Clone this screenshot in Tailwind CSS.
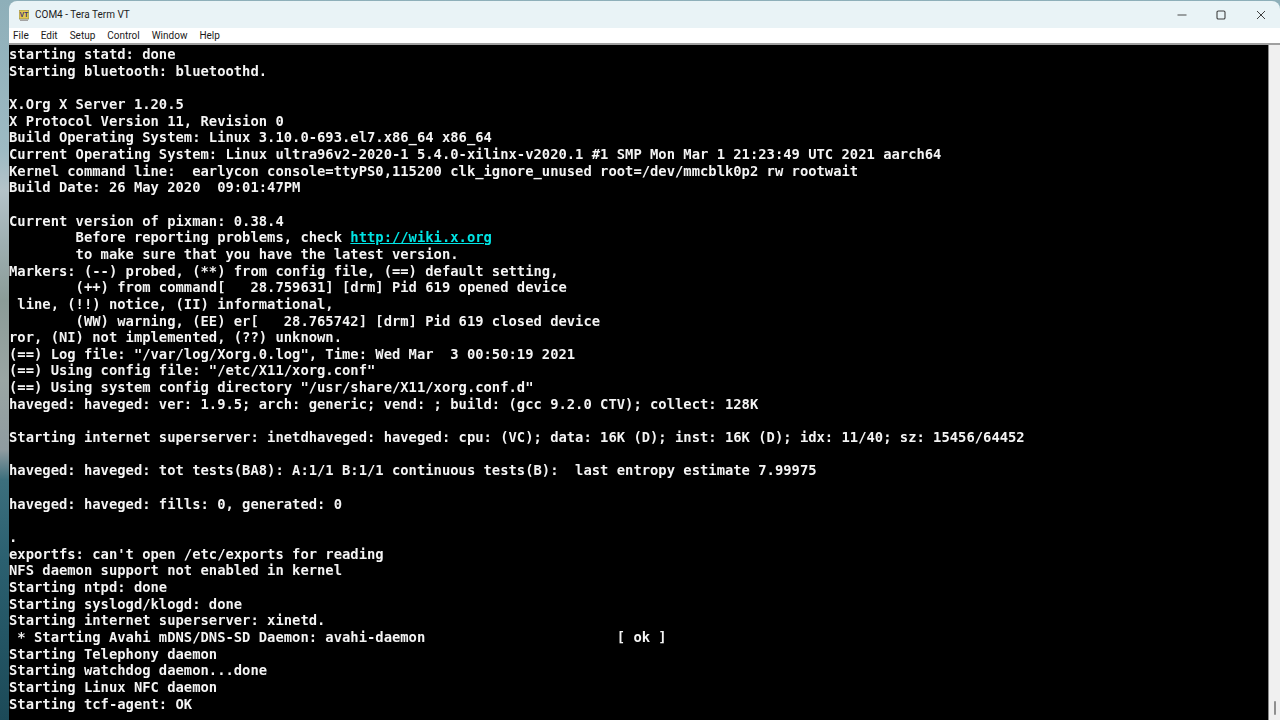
<!DOCTYPE html>
<html lang="en">
<head>
  <meta charset="UTF-8" />
  <title>COM4 - Tera Term VT</title>
  <script src="https://cdn.jsdelivr.net/npm/@tailwindcss/browser@4"></script>
</head>
<body class="h-screen overflow-hidden bg-[linear-gradient(180deg,#8eafb9_0px,#9dbac3_150px,#b4c3c9_190px,#9fb0b3_240px,#8b9c98_300px,#9aa6a4_380px,#8f9ba0_450px,#3c6f7d_480px,#2b6070_560px,#1c4a58_720px)]">
  <div class="ml-[9px] mt-[1px] flex h-[719px] flex-col overflow-hidden rounded-tl-[8px] rounded-tr-[8px]">
    <!-- Title bar -->
    <div class="flex h-[27px] shrink-0 items-center bg-[#e9f3f6] pl-[10px] font-['Roboto',sans-serif] text-[10px] text-[#1c1c1c]">
      <svg class="mr-[6px] mt-[1px] h-[11px] w-[10px]" viewBox="0 0 10 11">
        <rect x="0" y="0" width="10" height="9" fill="#e3c94f" stroke="#8d8a5c" stroke-width="0.8" />
        <text x="5" y="7" text-anchor="middle" font-size="6.5" font-weight="700" fill="#37327a" font-family="Liberation Sans">VT</text>
        <rect x="1" y="9.5" width="8" height="1.5" fill="#a3a3a3" />
      </svg>
      <span>COM4 - Tera Term VT</span>
      <div class="ml-auto flex items-center pr-[14px]">
        <svg class="h-[10px] w-[10px]" viewBox="0 0 10 10"><path d="M0.5 5H9.5" stroke="#4a4a4a" stroke-width="1.1" /></svg>
        <svg class="ml-[29px] h-[10px] w-[10px]" viewBox="0 0 10 10"><rect x="1" y="1" width="8" height="8" rx="1.3" fill="none" stroke="#3f3f3f" stroke-width="1.1" /></svg>
        <svg class="ml-[30px] h-[10px] w-[10px]" viewBox="0 0 10 10"><path d="M1 1L9 9M9 1L1 9" stroke="#3f3f3f" stroke-width="1" /></svg>
      </div>
    </div>
    <!-- Menu -->
    <div class="flex h-[14px] shrink-0 items-center gap-[12px] bg-white pl-[4px] font-['Roboto',sans-serif] text-[10px] text-[#1a1a1a]">
      <span>File</span><span>Edit</span><span>Setup</span><span>Control</span><span>Window</span><span>Help</span>
    </div>
    <div class="h-px shrink-0 bg-white"></div>
    <div class="h-[2px] shrink-0 bg-[#a0a0a0]"></div>
    <!-- Terminal -->
    <div class="flex min-h-0 flex-1">
      <pre class="w-[1259px] overflow-hidden bg-black pt-px font-['DejaVu_Sans_Mono',monospace] text-[13.84px] leading-[16.65px] font-bold text-[#f4f4f4] blur-[0.3px]">starting statd: done
Starting bluetooth: bluetoothd.

X.Org X Server 1.20.5
X Protocol Version 11, Revision 0
Build Operating System: Linux 3.10.0-693.el7.x86_64 x86_64
Current Operating System: Linux ultra96v2-2020-1 5.4.0-xilinx-v2020.1 #1 SMP Mon Mar 1 21:23:49 UTC 2021 aarch64
Kernel command line:  earlycon console=ttyPS0,115200 clk_ignore_unused root=/dev/mmcblk0p2 rw rootwait
Build Date: 26 May 2020  09:01:47PM

Current version of pixman: 0.38.4
        Before reporting problems, check <span class="text-[#00e5e5] underline">http://wiki.x.org</span>
        to make sure that you have the latest version.
Markers: (--) probed, (**) from config file, (==) default setting,
        (++) from command[   28.759631] [drm] Pid 619 opened device
 line, (!!) notice, (II) informational,
        (WW) warning, (EE) er[   28.765742] [drm] Pid 619 closed device
ror, (NI) not implemented, (??) unknown.
(==) Log file: "/var/log/Xorg.0.log", Time: Wed Mar  3 00:50:19 2021
(==) Using config file: "/etc/X11/xorg.conf"
(==) Using system config directory "/usr/share/X11/xorg.conf.d"
haveged: haveged: ver: 1.9.5; arch: generic; vend: ; build: (gcc 9.2.0 CTV); collect: 128K

Starting internet superserver: inetdhaveged: haveged: cpu: (VC); data: 16K (D); inst: 16K (D); idx: 11/40; sz: 15456/64452

haveged: haveged: tot tests(BA8): A:1/1 B:1/1 continuous tests(B):  last entropy estimate 7.99975

haveged: haveged: fills: 0, generated: 0

.
exportfs: can't open /etc/exports for reading
NFS daemon support not enabled in kernel
Starting ntpd: done
Starting syslogd/klogd: done
Starting internet superserver: xinetd.
 * Starting Avahi mDNS/DNS-SD Daemon: avahi-daemon                       [ ok ]
Starting Telephony daemon
Starting watchdog daemon...done
Starting Linux NFC daemon
Starting tcf-agent: OK</pre>
      <!-- Scrollbar -->
      <div class="flex flex-1 justify-center border-l border-l-[#8a8a8a] bg-[#f0f0f0]">
        <div class="mt-[656px] h-[14px] w-[2px] rounded-full bg-[#8f8f8f]"></div>
      </div>
    </div>
  </div>
</body>
</html>
